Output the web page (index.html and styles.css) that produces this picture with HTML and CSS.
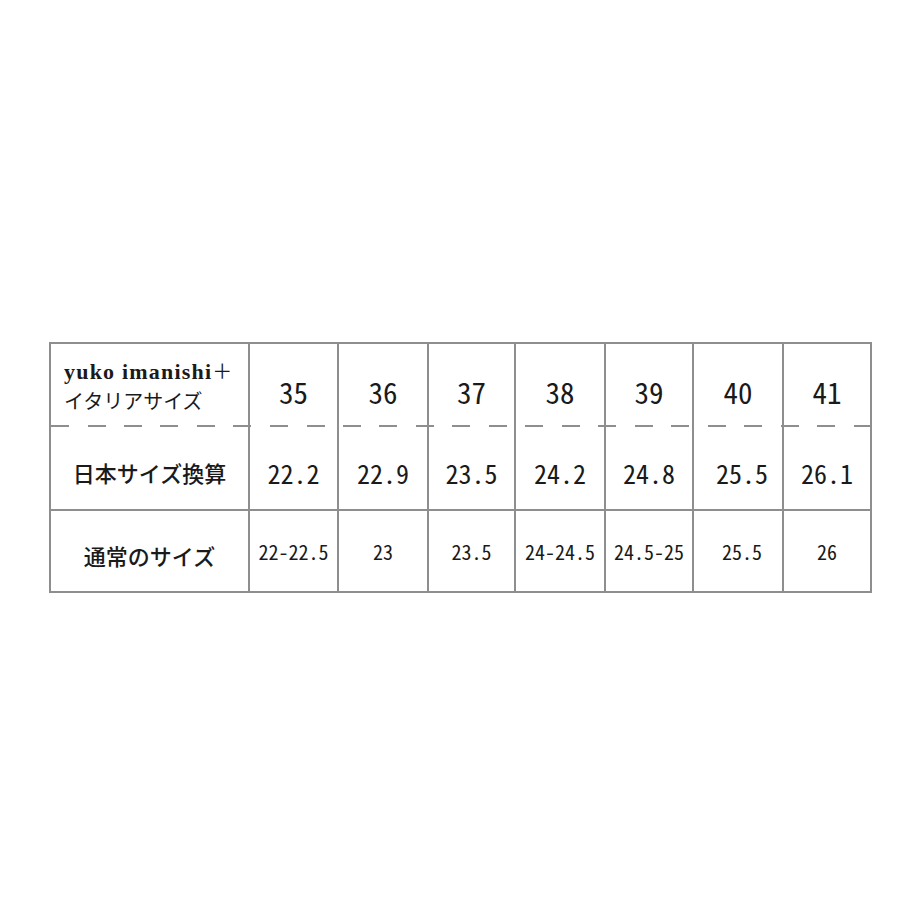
FILE: index.html
```html
<!DOCTYPE html>
<html lang="ja">
<head>
<meta charset="utf-8">
<title>サイズ表</title>
<link rel="stylesheet" href="styles.css">
</head>
<body>
<div class="sheet">
  <div class="row row-head">
    <div class="cell label label-head"><span class="latin">yuko imanishi</span>＋<br>イタリアサイズ</div>
    <div class="cell num-lg">35</div>
    <div class="cell num-lg">36</div>
    <div class="cell num-lg">37</div>
    <div class="cell num-lg">38</div>
    <div class="cell num-lg">39</div>
    <div class="cell num-lg">40</div>
    <div class="cell num-lg">41</div>
  </div>
  <div class="row row-mid">
    <div class="cell label">日本サイズ換算</div>
    <div class="cell num-md">22.2</div>
    <div class="cell num-md">22.9</div>
    <div class="cell num-md">23.5</div>
    <div class="cell num-md">24.2</div>
    <div class="cell num-md">24.8</div>
    <div class="cell num-md shift">25.5</div>
    <div class="cell num-md">26.1</div>
  </div>
  <div class="row row-foot">
    <div class="cell label">通常のサイズ</div>
    <div class="cell num-sm">22-22.5</div>
    <div class="cell num-sm">23</div>
    <div class="cell num-sm">23.5</div>
    <div class="cell num-sm">24-24.5</div>
    <div class="cell num-sm">24.5-25</div>
    <div class="cell num-sm shift">25.5</div>
    <div class="cell num-sm">26</div>
  </div>
</div>
</body>
</html>
```
FILE: styles.css
```css
html, body {
  margin: 0;
  padding: 0;
  background: #ffffff;
}

body {
  padding: 342px 0 0 49px;
  color: #1a1a1a;
  font-family: "Noto Sans CJK JP", "Noto Sans", sans-serif;
}

.sheet {
  width: 819px;
  border: 2px solid #8e8e8e;
}

.row {
  display: grid;
  grid-template-columns: 197px 89px 90px 87px 90px 88px 90px 88px;
}

.row-head {
  height: 83px;
  background-image: repeating-linear-gradient(90deg, #8e8e8e 0 18px, transparent 18px 36.5px);
  background-size: 100% 2px;
  background-position: left bottom;
  background-repeat: no-repeat;
}

.row-mid {
  height: 84px;
  box-sizing: border-box;
  border-bottom: 2px solid #8e8e8e;
}

.row-foot {
  height: 80px;
}

.cell {
  box-sizing: border-box;
  border-left: 2px solid #8e8e8e;
  display: flex;
  align-items: center;
  justify-content: center;
  font-feature-settings: "hwid" 1;
  line-height: 1;
}

.cell:first-child {
  border-left: none;
}

.label {
  font-size: 22px;
  font-weight: 500;
  padding-top: 8px;
}

.label-head {
  display: block;
  font-size: 20px;
  font-weight: 400;
  line-height: 29px;
  padding: 12px 0 0 13px;
  font-feature-settings: normal;
}

.latin {
  font-family: "Liberation Serif", serif;
  font-size: 22px;
  font-weight: 700;
  letter-spacing: 1.2px;
}

.num-lg {
  font-size: 29px;
  padding-top: 12px;
}

.num-md {
  font-size: 26px;
  padding-top: 10px;
}

.num-sm {
  font-size: 20px;
  padding-top: 2px;
}

.shift {
  padding-left: 8px;
}
```
